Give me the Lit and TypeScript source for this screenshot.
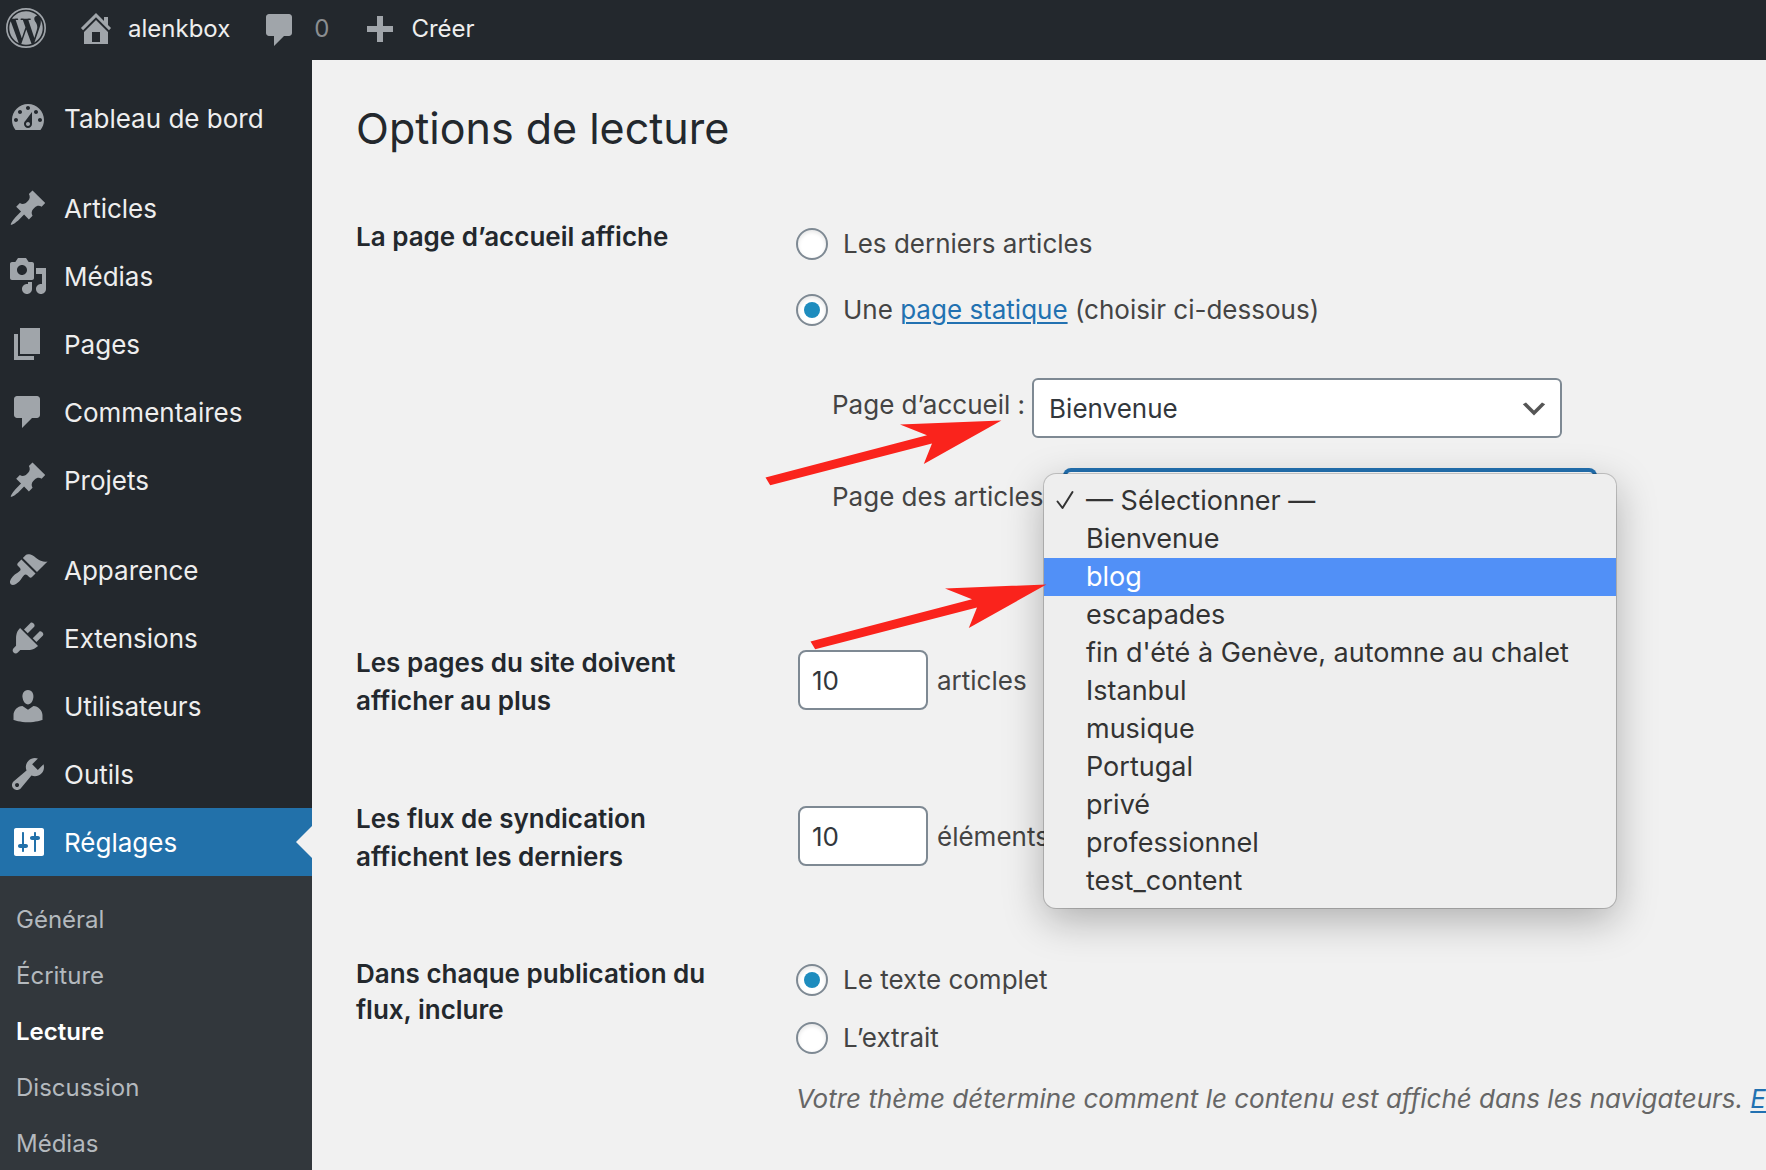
import { LitElement, html, css, svg } from "lit";
import { customElement, property, state } from "lit/decorators.js";
import { classMap } from "lit/directives/class-map.js";

const ICONS: Record<string, string> = {
  home: "M16 8.5l1.53 1.53-1.06 1.06L10 4.6l-6.47 6.49-1.06-1.06L10 2.5l4 4v-2h2v4zm-6-2.46l6 5.99V18H4v-5.97zM12 17v-5H8v5h4z",
  bubble:
    "M4.500 2h10c.83 0 1.500.67 1.500 1.500v8c0 .83-.67 1.500-1.500 1.500H12l-5 5v-5H4.500c-.83 0-1.500-.67-1.500-1.500v-8C3 2.670 3.670 2 4.500 2z",
  plus: "M17 9v3h-5v5H9v-5H4V9h5V4h3v5h5z",
  dashboard:
    "M3.76 16h12.48c1.1-1.37 1.76-3.11 1.76-5 0-4.42-3.58-8-8-8s-8 3.58-8 8c0 1.89.66 3.63 1.76 5zM10 4c.55 0 1 .45 1 1s-.45 1-1 1-1-.45-1-1 .45-1 1-1zM6 6c.55 0 1 .45 1 1s-.45 1-1 1-1-.45-1-1 .45-1 1-1zm8 0c.55 0 1 .45 1 1s-.45 1-1 1-1-.45-1-1 .45-1 1-1zm-5.37 5.55L12 7v6c0 1.1-.9 2-2 2s-2-.9-2-2c0-.57.24-1.08.63-1.45zM4 10c.55 0 1 .45 1 1s-.45 1-1 1-1-.45-1-1 .45-1 1-1zm12 0c.55 0 1 .45 1 1s-.45 1-1 1-1-.45-1-1 .45-1 1-1zm-5 3c0-.55-.45-1-1-1s-1 .45-1 1 .45 1 1 1 1-.45 1-1z",
  pin: "M10.44 3.02l1.82-1.82 6.36 6.35-1.83 1.82c-1.05-.68-2.48-.57-3.41.36l-.75.75c-.92.93-1.04 2.35-.35 3.41l-1.83 1.82-2.41-2.41-2.8 2.79c-.42.42-3.38 2.71-3.8 2.29s1.86-3.39 2.28-3.81l2.79-2.79L4.1 9.36l1.83-1.82c1.05.69 2.48.57 3.4-.36l.75-.75c.93-.92 1.05-2.35.36-3.41z",
  media:
    "M13 11V4c0-.55-.45-1-1-1h-1.67L9 1H5L3.67 3H2c-.55 0-1 .45-1 1v7c0 .55.45 1 1 1h10c.55 0 1-.45 1-1zM7 4.5c1.38 0 2.5 1.12 2.5 2.5S8.38 9.5 7 9.5 4.5 8.38 4.5 7 5.62 4.5 7 4.5zM14 6h5v10.5c0 1.38-1.12 2.5-2.5 2.5S14 17.88 14 16.5s1.12-2.5 2.5-2.5c.17 0 .34.02.5.05V9h-3V6zm-4 8.05V13h2v3.5c0 1.38-1.12 2.5-2.5 2.5S7 17.88 7 16.5 8.12 14 9.5 14c.17 0 .34.02.5.05z",
  page: "M6 15V2h10v13H6zm-1 1h8v2H3V5h2v11z",
  brush:
    "M14.48 11.06L7.41 3.99l1.5-1.5c.5-.56 2.3-.47 3.51.32 1.21.8 1.43 1.28 2.91 2.1 1.18.64 2.45 1.26 4.45.85zm-.71.71L6.7 4.7 4.93 6.47c-.39.39-.39 1.02 0 1.41l1.06 1.06c.39.39.39 1.03 0 1.42-.6.6-1.43 1.11-2.21 1.69-.35.26-.7.53-1.01.84C1.43 14.23.4 16.08 1.4 17.07c.99 1 2.84-.03 4.18-1.36.31-.31.58-.66.85-1.02.57-.78 1.08-1.61 1.69-2.21.39-.39 1.02-.39 1.41 0l1.06 1.06c.39.39 1.02.39 1.41 0z",
  plug: "M13.11 4.36L9.87 7.6 8 5.73l3.24-3.24c.35-.34 1.05-.2 1.56.32.52.51.66 1.21.31 1.55zm-8 1.77l.91-1.12 9.01 9.01-1.19.84c-.71.71-2.63 1.16-3.82 1.16H6.14L4.9 17.26c-.59.59-1.54.59-2.12 0-.59-.58-.59-1.53 0-2.12l1.24-1.24v-3.88c0-1.13.4-3.19 1.09-3.89zm7.26 3.97l3.24-3.24c.34-.35 1.04-.21 1.55.31.52.51.66 1.21.31 1.55l-3.24 3.25z",
  user: "M10 9.25c-2.27 0-2.73-3.44-2.73-3.44C7 4.02 7.82 2 9.97 2c2.16 0 2.98 2.02 2.71 3.81 0 0-.41 3.44-2.68 3.44zm0 2.57L12.72 10c2.39 0 4.52 2.33 4.52 4.53v2.49s-3.65 1.13-7.24 1.13c-3.65 0-7.24-1.13-7.24-1.13v-2.49c0-2.25 1.94-4.48 4.47-4.48z",
  wrench:
    "M16.68 9.77c-1.34 1.34-3.3 1.67-4.95.99l-5.41 6.52c-.99.99-2.59.99-3.58 0s-.99-2.59 0-3.57l6.52-5.42c-.68-1.65-.35-3.61.99-4.95 1.28-1.28 3.12-1.62 4.72-1.06l-2.89 2.89 2.82 2.82 2.86-2.87c.53 1.58.18 3.39-1.08 4.65zM3.81 16.21c.4.39 1.04.39 1.43 0 .4-.4.4-1.04 0-1.43-.39-.4-1.03-.4-1.43 0-.39.39-.39 1.03 0 1.43z",
  settings:
    "M18 16V4c0-.55-.45-1-1-1H4c-.55 0-1 .45-1 1v12c0 .55.45 1 1 1h13c.55 0 1-.45 1-1zM8 11h1c.55 0 1 .45 1 1s-.45 1-1 1H8v1.5c0 .28-.22.5-.5.5s-.5-.22-.5-.5V13H6c-.55 0-1-.45-1-1s.45-1 1-1h1V5.5c0-.28.22-.5.5-.5s.5.22.5.5V11zm5-2h-1c-.55 0-1-.45-1-1s.45-1 1-1h1V5.5c0-.28.22-.5.5-.5s.5.22.5.5V7h1c.55 0 1 .45 1 1s-.45 1-1 1h-1v5.5c0 .28-.22.5-.5.5s-.5-.22-.5-.5V9z",
  chevron: "M5 6l5 5 5-5 2 1-7 7-7-7 2-1z",
};

// The emblem's light segments, on a 24-unit grid; the ring is a separate circle.
const EMBLEM =
  "M21.469 6.825c.84 1.537 1.318 3.3 1.318 5.175 0 3.979-2.156 7.456-5.363 9.325l3.295-9.527c.615-1.54.82-2.771.82-3.864 0-.405-.026-.78-.07-1.11m-7.981.105c.647-.03 1.232-.105 1.232-.105.582-.075.514-.93-.067-.899 0 0-1.755.135-2.88.135-1.064 0-2.85-.15-2.85-.15-.585-.03-.661.855-.075.885 0 0 .54.061 1.125.09l1.68 4.605-2.37 7.08L5.354 6.9c.649-.03 1.234-.1 1.234-.1.585-.075.516-.93-.065-.896 0 0-1.746.138-2.874.138-.2 0-.438-.008-.69-.015C4.911 3.15 8.235 1.215 12 1.215c2.809 0 5.365 1.072 7.286 2.833-.046-.003-.091-.009-.141-.009-1.06 0-1.812.923-1.812 1.914 0 .89.513 1.643 1.06 2.531.411.72.89 1.643.89 2.977 0 .915-.354 1.994-.821 3.479l-1.075 3.585-3.9-11.61.001.014zM12 22.784c-1.059 0-2.081-.153-3.048-.437l3.237-9.406 3.315 9.087c.024.053.05.101.078.149-1.12.393-2.325.609-3.582.609M1.211 12c0-1.564.336-3.05.935-4.39L7.29 21.709C3.694 19.96 1.212 16.271 1.211 12";

const icon = (name: string) =>
  html`<svg class="icon" viewBox="0 0 20 20" aria-hidden="true">${svg`<path fill-rule="evenodd" d=${ICONS[name]}></path>`}</svg>`;

const emblem = () =>
  html`<svg class="icon" viewBox="0 0 24 24" aria-hidden="true">
    <circle class="ring" cx="12" cy="12" r="11.500"></circle>
    <path d=${EMBLEM} transform="translate(12 12) scale(0.930) translate(-12 -12)"></path>
  </svg>`;

const MENU: { label: string; icon: string }[][] = [
  [{ label: "Tableau de bord", icon: "dashboard" }],
  [
    { label: "Articles", icon: "pin" },
    { label: "Médias", icon: "media" },
    { label: "Pages", icon: "page" },
    { label: "Commentaires", icon: "bubble" },
    { label: "Projets", icon: "pin" },
  ],
  [
    { label: "Apparence", icon: "brush" },
    { label: "Extensions", icon: "plug" },
    { label: "Utilisateurs", icon: "user" },
    { label: "Outils", icon: "wrench" },
    { label: "Réglages", icon: "settings" },
  ],
];

const SUBMENU = ["Général", "Écriture", "Lecture", "Discussion", "Médias"];

const PAGES = [
  "Bienvenue",
  "blog",
  "escapades",
  "fin d'été à Genève, automne au chalet",
  "Istanbul",
  "musique",
  "Portugal",
  "privé",
  "professionnel",
  "test_content",
];
const NONE = "— Sélectionner —";

const iconStyles = css`
  .icon {
    display: block;
    flex: none;
    width: 40px;
    height: 40px;
    fill: #a0a5aa;
  }
`;

@customElement("admin-bar")
export class AdminBar extends LitElement {
  static styles = [
    iconStyles,
    css`
      :host {
        display: block;
        background: #23282d;
      }
      .bar {
        display: flex;
        align-items: center;
        height: 56px;
        padding: 0 6px;
        font-size: 24px;
      }
      .item {
        display: flex;
        align-items: center;
        color: #eee;
        text-decoration: none;
      }
      .logo {
        margin-right: 30px;
      }
      .ring {
        fill: none;
        stroke: #a0a5aa;
        stroke-width: 1;
      }
      .site {
        gap: 12px;
        margin-right: 30px;
      }
      .replies {
        gap: 14px;
        margin-right: 30px;
      }
      .replies .icon {
        padding-top: 4px;
      }
      .create {
        gap: 12px;
      }
      .count {
        color: #8b8e91;
      }
    `,
  ];

  render() {
    return html`
      <nav class="bar" aria-label="Barre d’outils">
        <a class="item logo" href="#wp" aria-label="WordPress">${emblem()}</a>
        <a class="item site" href="#site">${icon("home")}<span>alenkbox</span></a>
        <a class="item replies" href="#comments">${icon("bubble")}<span class="count">0</span></a>
        <a class="item create" href="#new">${icon("plus")}<span>Créer</span></a>
      </nav>
    `;
  }
}

@customElement("admin-menu")
export class AdminMenu extends LitElement {
  @property() current = "Réglages";
  @property() currentSub = "Lecture";

  static styles = [
    iconStyles,
    css`
      :host {
        display: block;
        background: #23282d;
      }
      .menu {
        display: flex;
        flex-direction: column;
        gap: 22px;
        padding-top: 24px;
      }
      .list,
      .sub {
        margin: 0;
        padding: 0;
        list-style: none;
      }
      .entry {
        display: flex;
        align-items: center;
        gap: 16px;
        height: 68px;
        padding-left: 8px;
        color: #eee;
        text-decoration: none;
        font-size: 26px;
      }
      .entry.current {
        position: relative;
        background: #2271aa;
        color: #fff;
      }
      .entry.current .icon {
        fill: #fff;
      }
      .entry.current::after {
        content: "";
        position: absolute;
        right: 0;
        top: 18px;
        border: 16px solid transparent;
        border-left-width: 0;
        border-right-color: #f1f1f1;
      }
      .sub {
        padding: 15px 0;
        background: #32373c;
      }
      .sub-link {
        display: flex;
        align-items: center;
        height: 56px;
        padding-left: 16px;
        color: #b4b9be;
        text-decoration: none;
        font-size: 24px;
      }
      .sub-link.current {
        color: #fff;
        font-weight: 600;
      }
    `,
  ];

  render() {
    return html`
      <nav class="menu" aria-label="Menu principal">
        ${MENU.map(
          (group) => html`<ul class="list">
            ${group.map((m) => {
              const current = m.label === this.current;
              return html`<li>
                <a class=${classMap({ entry: true, current })} href="#${m.icon}">${icon(m.icon)}<span>${m.label}</span></a>
                ${current
                  ? html`<ul class="sub">
                      ${SUBMENU.map(
                        (s) => html`<li>
                          <a class=${classMap({ "sub-link": true, current: s === this.currentSub })} href="#sub">${s}</a>
                        </li>`
                      )}
                    </ul>`
                  : ""}
              </li>`;
            })}
          </ul>`
        )}
      </nav>
    `;
  }
}

@customElement("reading-options")
export class ReadingOptions extends LitElement {
  @state() private highlighted = "blog";
  @state() private postsPage = NONE;

  static styles = [
    iconStyles,
    css`
      :host {
        display: block;
        min-width: 0;
        overflow: hidden;
        background: #f1f1f1;
        color: #444;
        font-size: 26px;
      }
      .content {
        padding: 38px 0 0 44px;
      }
      .title {
        margin: 0;
        color: #23282d;
        font-size: 43px;
        font-weight: 400;
        line-height: 60px;
      }
      .row {
        display: grid;
        grid-template-columns: 440px minmax(0, 1fr);
      }
      .row.front {
        padding-top: 60px;
        min-height: 426px;
      }
      .row.number {
        min-height: 156px;
      }
      .heading {
        margin: 0;
        padding: 0 60px 0 0;
        color: #23282d;
        font-size: 26px;
        font-weight: 600;
        line-height: 38px;
      }
      .row.feed .heading {
        line-height: 36px;
      }
      .group {
        margin: 0;
        padding: 0;
        border: 0;
        min-width: 0;
      }
      .choice {
        display: flex;
        align-items: center;
        gap: 15px;
        line-height: 32px;
      }
      .front-choices {
        display: flex;
        flex-direction: column;
        gap: 34px;
        padding-top: 10px;
      }
      .feed-choices {
        display: flex;
        flex-direction: column;
        gap: 26px;
        padding-top: 8px;
      }
      .radio {
        appearance: none;
        box-sizing: border-box;
        flex: none;
        display: grid;
        place-items: center;
        width: 32px;
        height: 32px;
        margin: 0;
        border: 2px solid #7e8993;
        border-radius: 50%;
        background: #fff;
        box-shadow: inset 0 2px 4px rgba(0, 0, 0, 0.1);
      }
      .radio:checked::before {
        content: "";
        width: 16px;
        height: 16px;
        border-radius: 50%;
        background: #1e8cbe;
      }
      a {
        color: #2271b1;
        text-decoration-thickness: 2px;
        text-underline-offset: 3px;
      }
      .pages {
        position: relative;
        display: flex;
        flex-direction: column;
        gap: 32px;
        margin: 52px 0 0;
        padding: 0 0 0 36px;
      }
      .pick {
        display: flex;
        align-items: center;
        gap: 7px;
      }
      .pick-label {
        padding-bottom: 6px;
        line-height: 32px;
        white-space: nowrap;
      }
      .select-box {
        position: relative;
        width: 530px;
      }
      .select {
        appearance: none;
        box-sizing: border-box;
        display: block;
        width: 100%;
        height: 60px;
        padding: 0 48px 0 15px;
        border: 2px solid #7e8993;
        border-radius: 6px;
        background: #fff;
        color: #32373c;
        font: inherit;
      }
      .select.focused {
        border-color: #2271b1;
        box-shadow: 0 0 0 2px #2271b1;
      }
      .chevron {
        position: absolute;
        right: 12px;
        top: 15px;
        pointer-events: none;
      }
      .chevron .icon {
        width: 32px;
        height: 32px;
        fill: #555;
      }
      .popup {
        position: absolute;
        left: 248px;
        top: 96px;
        z-index: 1;
        box-sizing: border-box;
        width: 572px;
        margin: 0;
        padding: 8px 0;
        border-radius: 12px;
        background: #eee;
        box-shadow: 0 0 0 1px rgba(0, 0, 0, 0.18), 0 12px 40px rgba(0, 0, 0, 0.28);
      }
      .option {
        display: grid;
        grid-template-columns: 30px 1fr;
        align-items: center;
        width: 100%;
        height: 38px;
        padding: 0 0 0 12px;
        border: 0;
        background: none;
        color: #333;
        font: inherit;
        font-size: 27px;
        line-height: 38px;
        text-align: left;
        white-space: nowrap;
      }
      .option.active {
        background: #5190f7;
        color: #fff;
      }
      .tick {
        width: 18px;
        height: 20px;
        fill: none;
        stroke: #333;
        stroke-width: 2;
        stroke-linecap: round;
        stroke-linejoin: round;
      }
      .arrow {
        position: absolute;
        z-index: 2;
        width: 238px;
        height: 66px;
        fill: #fa231c;
        pointer-events: none;
      }
      .arrow.home {
        left: -31px;
        top: 42px;
      }
      .arrow.blog {
        left: 14px;
        top: 206px;
      }
      .amount {
        display: flex;
        align-items: center;
        align-self: start;
        gap: 9px;
        padding: 6px 0 0 2px;
      }
      .number-input {
        appearance: textfield;
        box-sizing: border-box;
        width: 130px;
        height: 60px;
        margin: 0;
        padding: 0 12px;
        border: 2px solid #7e8993;
        border-radius: 8px;
        background: #fff;
        color: #32373c;
        font: inherit;
      }
      .number-input::-webkit-inner-spin-button {
        appearance: none;
        margin: 0;
      }
      .note {
        margin: 26px 0 0;
        color: #666;
        font-style: italic;
        line-height: 38px;
        white-space: nowrap;
      }
    `,
  ];

  private choose(value: string) {
    this.postsPage = value;
  }

  private radio(name: string, id: string, checked: boolean) {
    return html`<input class="radio" type="radio" name=${name} id=${id} ?checked=${checked} />`;
  }

  private arrow(kind: string) {
    return html`<svg class="arrow ${kind}" viewBox="0 0 238 66" aria-hidden="true">
      <path d="M236.4 21L135 25l27 10.700L0.500 78L5.200 85.700L167 44L158.800 64.500z" transform="translate(0 -20.500)"></path>
    </svg>`;
  }

  render() {
    return html`
      <main class="content">
        <h1 class="title">Options de lecture</h1>

        <section class="row front">
          <h2 class="heading">La page d’accueil affiche</h2>
          <fieldset class="group" aria-label="La page d’accueil affiche">
            <div class="front-choices">
              <div class="choice">
                ${this.radio("front", "front-posts", false)}
                <label for="front-posts">Les derniers articles</label>
              </div>
              <div class="choice">
                ${this.radio("front", "front-page", true)}
                <label for="front-page">Une <a href="#pages">page statique</a> (choisir ci-dessous)</label>
              </div>
            </div>
            <div class="pages">
              <div class="pick">
                <label class="pick-label" for="home-page">Page d’accueil :</label>
                <div class="select-box">
                  <select class="select" id="home-page">
                    ${PAGES.map((p) => html`<option>${p}</option>`)}
                  </select>
                  <span class="chevron">${icon("chevron")}</span>
                </div>
              </div>
              <div class="pick">
                <label class="pick-label" for="posts-page">Page des articles :</label>
                <div class="select-box">
                  <select class="select focused" id="posts-page">
                    ${[NONE, ...PAGES].map((p) => html`<option ?selected=${p === this.postsPage}>${p}</option>`)}
                  </select>
                  <span class="chevron">${icon("chevron")}</span>
                </div>
              </div>
              <div class="popup" role="listbox" aria-label="Page des articles">
                ${[NONE, ...PAGES].map(
                  (p) => html`<button
                    class=${classMap({ option: true, active: p === this.highlighted })}
                    type="button"
                    role="option"
                    aria-selected=${p === this.postsPage ? "true" : "false"}
                    @mouseenter=${() => (this.highlighted = p)}
                    @click=${() => this.choose(p)}
                  >
                    <span
                      >${p === this.postsPage
                        ? html`<svg class="tick" viewBox="0 0 18 20" aria-hidden="true"><path d="M1.500 11.500L6.500 18L16.500 2"></path></svg>`
                        : ""}</span
                    ><span>${p}</span>
                  </button>`
                )}
              </div>
              ${this.arrow("home")} ${this.arrow("blog")}
            </div>
          </fieldset>
        </section>

        <section class="row number">
          <h2 class="heading">Les pages du site doivent afficher au plus</h2>
          <div class="amount">
            <input class="number-input" id="per-page" type="number" value="10" />
            <label for="per-page">articles</label>
          </div>
        </section>

        <section class="row number">
          <h2 class="heading">Les flux de syndication affichent les derniers</h2>
          <div class="amount">
            <input class="number-input" id="per-feed" type="number" value="10" />
            <label for="per-feed">éléments</label>
          </div>
        </section>

        <section class="row feed">
          <h2 class="heading">Dans chaque publication du flux, inclure</h2>
          <fieldset class="group" aria-label="Dans chaque publication du flux, inclure">
            <div class="feed-choices">
              <div class="choice">
                ${this.radio("feed", "feed-full", true)}
                <label for="feed-full">Le texte complet</label>
              </div>
              <div class="choice">
                ${this.radio("feed", "feed-excerpt", false)}
                <label for="feed-excerpt">L’extrait</label>
              </div>
            </div>
            <p class="note">
              Votre thème détermine comment le contenu est affiché dans les navigateurs. <a href="#more">En savoir plus</a>.
            </p>
          </fieldset>
        </section>
      </main>
    `;
  }
}

@customElement("app-root")
export class AppRoot extends LitElement {
  static styles = css`
    :host {
      display: flex;
      flex-direction: column;
      height: 100vh;
      overflow: hidden;
      background: #23282d;
      font-family: Inter, Roboto, "Liberation Sans", sans-serif;
    }
    .top {
      flex: none;
      padding-bottom: 4px;
    }
    .body {
      flex: 1;
      min-height: 0;
      display: grid;
      grid-template-columns: 312px minmax(0, 1fr);
      overflow: hidden;
    }
  `;

  render() {
    return html`
      <admin-bar class="top"></admin-bar>
      <div class="body">
        <admin-menu></admin-menu>
        <reading-options></reading-options>
      </div>
    `;
  }
}
